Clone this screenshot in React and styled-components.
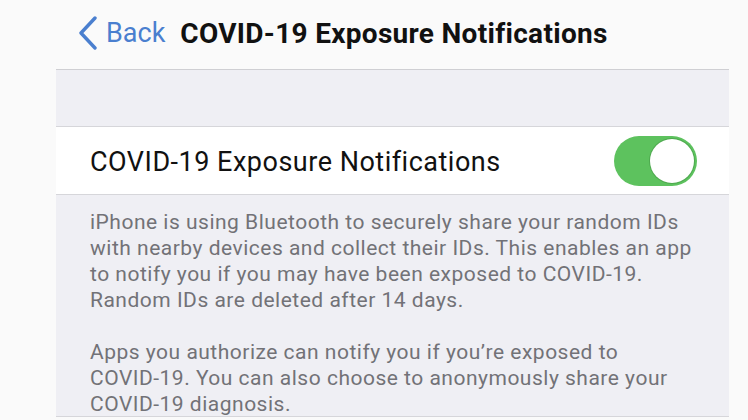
import React from "react";
import styled, { createGlobalStyle } from "styled-components";

const GlobalStyle = createGlobalStyle`
  html, body {
    margin: 0;
    padding: 0;
    background: #fafafa;
    font-family: Roboto, "Liberation Sans", sans-serif;
    -webkit-font-smoothing: antialiased;
  }
`;

const Page = styled.div`
  width: 748px;
  height: 420px;
  overflow: hidden;
  display: flex;
  flex-direction: column;
`;

const NavBar = styled.div`
  display: flex;
  align-items: center;
  height: 70px;
  margin-left: 56px;
  width: 673px;
  padding-left: 22px;
  padding-bottom: 3px;
  box-sizing: border-box;
  border-bottom: 1px solid #cfcfd3;
`;

const BackButton = styled.div`
  display: flex;
  align-items: center;
  gap: 8px;
  color: #4a7fcf;
  font-size: 27px;
  margin-right: 15px;
`;

const Title = styled.div`
  font-weight: 700;
  font-size: 28px;
  color: #111;
  letter-spacing: 0.3px;
`;

const Panel = styled.div`
  margin-left: 56px;
  width: 673px;
  background: #efeff4;
  display: flex;
  flex-direction: column;
`;

const Spacer = styled.div`
  height: 56px;
`;

const Row = styled.div`
  display: flex;
  align-items: center;
  justify-content: space-between;
  height: 67px;
  padding: 0 32px 0 34px;
  background: #fff;
  border-top: 1px solid #d6d6da;
  border-bottom: 1px solid #d6d6da;
`;

const RowLabel = styled.div`
  font-size: 27px;
  color: #111;
  letter-spacing: 0.5px;
  padding-top: 2px;
`;

const Toggle = styled.div`
  position: relative;
  width: 83px;
  height: 50px;
  border-radius: 25px;
  background: ${(p) => (p.on ? "#5dc25e" : "#e5e5ea")};
`;

const Knob = styled.div`
  position: absolute;
  top: 3px;
  left: ${(p) => (p.on ? "36px" : "3px")};
  width: 44px;
  height: 44px;
  border-radius: 50%;
  background: #fff;
  box-shadow: 0 0 0 1px rgba(60, 140, 60, 0.45);
`;

const Footer = styled.div`
  padding: 14px 32px 0 34px;
  height: 207px;
  border-bottom: 1px solid #d6d6da;
  color: #727277;
  font-size: 21px;
  line-height: 26px;
  letter-spacing: 0.5px;
`;

const Paragraph = styled.p`
  margin: 0 0 26px;
  white-space: nowrap;

  &:last-child {
    margin-bottom: 0;
  }
`;

const Chevron = () => (
  <svg width="20" height="34" viewBox="0 0 20 34">
    <path
      d="M17 2 L3 17 L17 32"
      fill="none"
      stroke="#4a7fcf"
      strokeWidth="3.4"
      strokeLinecap="round"
      strokeLinejoin="round"
    />
  </svg>
);

const App = () => {
  return (
    <>
      <GlobalStyle />
      <Page>
        <NavBar>
          <BackButton>
            <Chevron />
            Back
          </BackButton>
          <Title>COVID-19 Exposure Notifications</Title>
        </NavBar>
        <Panel>
          <Spacer />
          <Row>
            <RowLabel>COVID-19 Exposure Notifications</RowLabel>
            <Toggle on>
              <Knob on />
            </Toggle>
          </Row>
          <Footer>
            <Paragraph>
              iPhone is using Bluetooth to securely share your random IDs
              <br />
              with nearby devices and collect their IDs. This enables an app
              <br />
              to notify you if you may have been exposed to COVID-19.
              <br />
              Random IDs are deleted after 14 days.
            </Paragraph>
            <Paragraph>
              Apps you authorize can notify you if you’re exposed to
              <br />
              COVID-19. You can also choose to anonymously share your
              <br />
              COVID-19 diagnosis.
            </Paragraph>
          </Footer>
        </Panel>
      </Page>
    </>
  );
};

export default App;
